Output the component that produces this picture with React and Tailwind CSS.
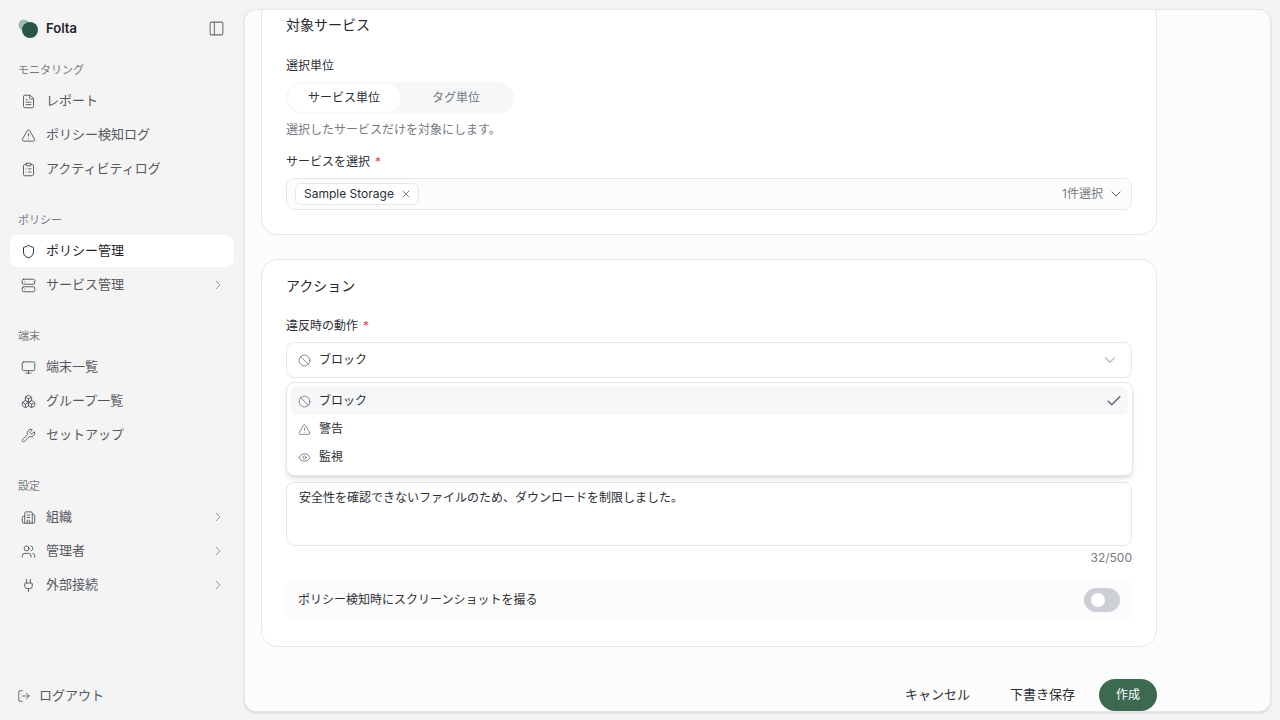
import React from "react";
import {
  Ban,
  Boxes,
  Building2,
  Check,
  ChevronDown,
  ChevronRight,
  ClipboardList,
  Eye,
  FileText,
  LogOut,
  Monitor,
  PanelLeft,
  Plug,
  Server,
  Shield,
  TriangleAlert,
  Users,
  Wrench,
  X,
} from "lucide-react";

const navGroups = [
  {
    title: "モニタリング",
    items: [
      { label: "レポート", icon: FileText },
      { label: "ポリシー検知ログ", icon: TriangleAlert },
      { label: "アクティビティログ", icon: ClipboardList },
    ],
  },
  {
    title: "ポリシー",
    items: [
      { label: "ポリシー管理", icon: Shield, active: true },
      { label: "サービス管理", icon: Server, arrow: true },
    ],
  },
  {
    title: "端末",
    items: [
      { label: "端末一覧", icon: Monitor },
      { label: "グループ一覧", icon: Boxes },
      { label: "セットアップ", icon: Wrench },
    ],
  },
  {
    title: "設定",
    items: [
      { label: "組織", icon: Building2, arrow: true },
      { label: "管理者", icon: Users, arrow: true },
      { label: "外部接続", icon: Plug, arrow: true },
    ],
  },
];

const options = [
  { label: "ブロック", icon: Ban, selected: true },
  { label: "警告", icon: TriangleAlert },
  { label: "監視", icon: Eye },
];

const NavItem = ({ item }) => {
  const Icon = item.icon;
  return (
    <div
      className={`flex h-8 items-center gap-[10px] rounded-lg pl-[11px] pr-2 text-[13px] ${
        item.active ? "bg-white text-[#1f2329]" : "text-[#55595f]"
      }`}
    >
      <Icon size={15} strokeWidth={1.5} className="shrink-0" />
      <span className="flex-1">{item.label}</span>
      {item.arrow && <ChevronRight size={16} strokeWidth={1.5} className="text-[#9a9da3]" />}
    </div>
  );
};

const Sidebar = () => (
  <aside className="flex h-full w-[244px] shrink-0 flex-col px-[10px]">
    <div className="mb-[6px] flex h-[56px] items-center justify-between pl-2 pr-[9px]">
      <div className="flex items-center gap-[8px]">
        <svg width="20" height="20" viewBox="0 0 20 20" className="mt-[1px]">
          <circle cx="6" cy="6" r="5.5" fill="#9dbda8" />
          <circle cx="12" cy="11" r="8" fill="#2a5445" />
        </svg>
        <span className="mt-[1px] text-[13px] font-semibold text-[#1f2329]">Folta</span>
      </div>
      <PanelLeft size={17} strokeWidth={1.5} className="text-[#6b6f76]" />
    </div>
    <nav className="flex flex-1 flex-col gap-[27px]">
      {navGroups.map((group) => (
        <div key={group.title}>
          <div className="mb-[7px] flex h-[16px] items-center pl-2 text-[11px] text-[#75797f]">{group.title}</div>
          <div className="flex flex-col gap-[2px]">
            {group.items.map((item) => (
              <NavItem key={item.label} item={item} />
            ))}
          </div>
        </div>
      ))}
    </nav>
    <div className="mb-[15px] flex h-[18px] items-center gap-[8px] pl-[7px] text-[13px] text-[#55595f]">
      <LogOut size={14} strokeWidth={1.5} />
      <span>ログアウト</span>
    </div>
  </aside>
);

const Label = ({ children, required }) => (
  <div className="flex h-[18px] items-center text-[12px] text-[#2b2f35]">
    {children}
    {required && <span className="ml-[5px] text-[#e5484d]">*</span>}
  </div>
);

const Card = ({ title, children, className }) => (
  <section className={`rounded-2xl border border-[#e7e7e9] bg-white px-6 ${className}`}>
    <h2 className="flex h-[20px] items-center text-[14px] text-[#25282d]">{title}</h2>
    {children}
  </section>
);

const TargetCard = () => (
  <Card title="対象サービス" className="h-[237px] pt-[15px]">
    <div className="mt-[23px]">
      <Label>選択単位</Label>
    </div>
    <div className="mt-[7px] flex h-8 w-[228px] items-center rounded-full bg-[#f6f7f8] p-[2px] text-[12px]">
      <div className="flex h-[28px] w-[112px] items-center justify-center rounded-full bg-white text-[#2b2f35]">
        サービス単位
      </div>
      <div className="flex h-[28px] w-[112px] items-center justify-center text-[#75797f]">タグ単位</div>
    </div>
    <p className="mt-[7px] h-[18px] text-[12px] leading-[18px] text-[#75797f]">選択したサービスだけを対象にします。</p>
    <div className="mt-[14px]">
      <Label required>サービスを選択</Label>
    </div>
    <div className="mt-[7px] flex h-8 items-center justify-between rounded-lg border border-[#e7e7e9] bg-[#fcfcfc] pl-2 pr-[7px]">
      <div className="flex h-[22px] items-center gap-[6px] rounded-md border border-[#e7e7e9] bg-white pl-2 pr-[6px] text-[12px] text-[#2b2f35]">
        Sample Storage
        <X size={12} strokeWidth={1.5} className="text-[#55595f]" />
      </div>
      <div className="flex items-center gap-[5px] text-[12px] text-[#75797f]">
        1件選択
        <ChevronDown size={16} strokeWidth={1.5} className="text-[#55595f]" />
      </div>
    </div>
  </Card>
);

const ActionDropdown = () => (
  <div className="absolute left-0 right-[-1px] top-[4px] z-10 rounded-lg border border-[#e7e7e9] bg-white p-1 shadow-md">
    {options.map((option) => {
      const Icon = option.icon;
      return (
        <div
          key={option.label}
          className={`flex h-[28px] items-center rounded-md pl-[7px] pr-[5px] text-[12px] text-[#2b2f35] ${
            option.selected ? "bg-[#f6f7f8]" : ""
          }`}
        >
          <Icon size={13} strokeWidth={1.5} className="mr-[8px] text-[#6b6f76]" />
          <span className="flex-1">{option.label}</span>
          {option.selected && <Check size={18} strokeWidth={1.5} className="text-[#55595f]" />}
        </div>
      );
    })}
  </div>
);

const ActionCard = () => (
  <Card title="アクション" className="mt-6 h-[388px] pt-[15px]">
    <div className="mt-[22px]">
      <Label required>違反時の動作</Label>
    </div>
    <div className="mt-[7px] flex h-9 items-center rounded-lg border border-[#e7e7e9] bg-white pl-[11px] pr-3 text-[12px] text-[#2b2f35]">
      <Ban size={13} strokeWidth={1.5} className="mr-[8px] text-[#6b6f76]" />
      <span className="flex-1">ブロック</span>
      <ChevronDown size={18} strokeWidth={1.5} className="text-[#b5b7bb]" />
    </div>
    <div className="relative h-[104px]">
      <ActionDropdown />
    </div>
    <div className="h-[64px] rounded-lg border border-[#e7e7e9] bg-white px-3 py-[6px] text-[12px] leading-[18px] text-[#2b2f35]">
      安全性を確認できないファイルのため、ダウンロードを制限しました。
    </div>
    <div className="mt-[3px] h-[18px] text-right text-[12px] leading-[18px] text-[#75797f]">32/500</div>
    <div className="mt-[11px] flex h-[44px] items-center justify-between rounded-lg bg-[#fcfcfd] pl-3 pr-3 text-[12px] text-[#2b2f35]">
      ポリシー検知時にスクリーンショットを撮る
      <div className="flex h-6 w-9 items-center rounded-full bg-[#cdcfd6] pl-[7px]">
        <div className="h-[14px] w-[14px] rounded-full bg-white" />
      </div>
    </div>
  </Card>
);

const App = () => (
  <div className="flex h-screen w-full overflow-hidden bg-[#f4f4f5] font-['Inter','Noto_Sans_CJK_JP',sans-serif]">
    <Sidebar />
    <main className="mb-2 mr-[9px] mt-[9px] flex-1 overflow-hidden rounded-xl border border-[#e7e7e9] bg-[#fcfcfc] shadow-sm">
      <div className="mt-[-12px] w-[912px] pl-4">
        <TargetCard />
        <ActionCard />
        <div className="mt-[32px] flex items-center justify-end text-[13px] text-[#2b2f35]">
          <button className="flex h-8 items-center px-3">キャンセル</button>
          <button className="ml-4 flex h-8 items-center px-3">下書き保存</button>
          <button className="ml-3 flex h-8 w-[58px] items-center justify-center rounded-full bg-[#3b6a50] text-[12px] text-white">
            作成
          </button>
        </div>
      </div>
    </main>
  </div>
);

export default App;
